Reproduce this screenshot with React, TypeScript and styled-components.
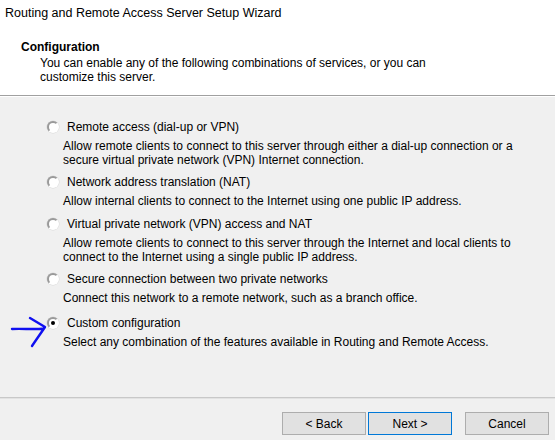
import styled, { createGlobalStyle } from 'styled-components';

const GlobalStyle = createGlobalStyle`
  html, body {
    margin: 0;
    padding: 0;
    background: #f0f0f0;
  }
  body {
    font-family: "Liberation Sans", Arial, sans-serif;
    font-size: 12px;
    color: #000;
  }
`;

const options = [
  {
    label: 'Remote access (dial-up or VPN)',
    desc: [
      'Allow remote clients to connect to this server through either a dial-up connection or a',
      'secure virtual private network (VPN) Internet connection.',
    ],
    space: 0,
  },
  {
    label: 'Network address translation (NAT)',
    desc: ['Allow internal clients to connect to the Internet using one public IP address.'],
    space: 8,
  },
  {
    label: 'Virtual private network (VPN) access and NAT',
    desc: [
      'Allow remote clients to connect to this server through the Internet and local clients to',
      'connect to the Internet using a single public IP address.',
    ],
    space: 9,
  },
  {
    label: 'Secure connection between two private networks',
    desc: ['Connect this network to a remote network, such as a branch office.'],
    space: 8,
  },
  {
    label: 'Custom configuration',
    desc: ['Select any combination of the features available in Routing and Remote Access.'],
    space: 11,
    checked: true,
  },
];

function App() {
  return (
    <Window>
      <GlobalStyle />
      <Header>
        <Title>Routing and Remote Access Server Setup Wizard</Title>
        <PageTitle>Configuration</PageTitle>
        <PageDesc>
          You can enable any of the following combinations of services, or you can
          <br />
          customize this server.
        </PageDesc>
      </Header>
      <Body>
        {options.map((o) => (
          <Option key={o.label} space={o.space}>
            <OptionRow>
              <Radio checked={!!o.checked} />
              <Label>{o.label}</Label>
            </OptionRow>
            <Desc>
              {o.desc.map((line) => (
                <div key={line}>{line}</div>
              ))}
            </Desc>
            {o.checked && (
              <Arrow width="40" height="34" viewBox="0 0 40 34">
                <path
                  d="M2 13 C 12 12.6, 23 13.4, 33 12.8 M20 2 C 25 5, 30 8, 35 11 C 31 17, 26 24, 22 30"
                  fill="none"
                  stroke="#1010f0"
                  strokeWidth="2.4"
                  strokeLinecap="round"
                  strokeLinejoin="round"
                />
              </Arrow>
            )}
          </Option>
        ))}
      </Body>
      <Footer>
        <Button>&lt; Back</Button>
        <Button primary>Next &gt;</Button>
        <Button gapLeft>Cancel</Button>
      </Footer>
    </Window>
  );
}

const Window = styled.div`
  width: 555px;
  height: 440px;
  display: flex;
  flex-direction: column;
  background: #f0f0f0;
  overflow: hidden;
`;

const Header = styled.div`
  height: 96px;
  background: #fff;
  border-bottom: 1px solid #a0a0a0;
  box-shadow: 0 1px 0 #ffffff;
  padding: 6px 0 0 5px;
  box-sizing: border-box;
`;

const Title = styled.div`
  font-size: 12.5px;
  line-height: 14px;
`;

const PageTitle = styled.div`
  margin: 20px 0 0 16px;
  font-weight: bold;
  line-height: 14px;
`;

const PageDesc = styled.div`
  margin: 2px 0 0 35px;
  line-height: 14px;
`;

const Body = styled.div`
  flex: 1;
  padding: 24px 0 0 47px;
`;

const Option = styled.div<{ space: number }>`
  position: relative;
  margin-top: ${({ space }) => space}px;
`;

const OptionRow = styled.div`
  display: flex;
  align-items: center;
  height: 14px;
`;

const Radio = styled.span<{ checked: boolean }>`
  position: relative;
  width: 8px;
  height: 8px;
  border-radius: 50%;
  border: 2px solid;
  border-color: #9a9a9a #ffffff #ffffff #9a9a9a;
  background: #fff;
  box-shadow: 0 0 0 0.5px #d8d8d8;
  margin-right: 8px;
  &::after {
    content: '';
    display: ${({ checked }) => (checked ? 'block' : 'none')};
    position: absolute;
    left: 2px;
    top: 2px;
    width: 4px;
    height: 4px;
    border-radius: 50%;
    background: #000;
  }
`;

const Label = styled.span`
  line-height: 14px;
`;

const Desc = styled.div`
  margin: 5px 0 0 16px;
  line-height: 14px;
`;

const Arrow = styled.svg`
  position: absolute;
  left: -37px;
  top: 0;
`;

const Footer = styled.div`
  height: 43px;
  border-top: 1px solid #c8c8c8;
  box-shadow: inset 0 1px 0 #e2e2e2;
  display: flex;
  justify-content: flex-end;
  align-items: flex-start;
  padding: 14px 6px 0 0;
  box-sizing: border-box;
`;

const Button = styled.button<{ primary?: boolean; gapLeft?: boolean }>`
  width: 84px;
  height: 23px;
  margin-left: ${({ gapLeft }) => (gapLeft ? '13px' : '2px')};
  background: #e1e1e1;
  border: 1px solid ${({ primary }) => (primary ? '#0078d7' : '#adadad')};
  font-family: "Liberation Sans", Arial, sans-serif;
  font-size: 12px;
  color: #000;
  padding: 0;
`;

export default App;
